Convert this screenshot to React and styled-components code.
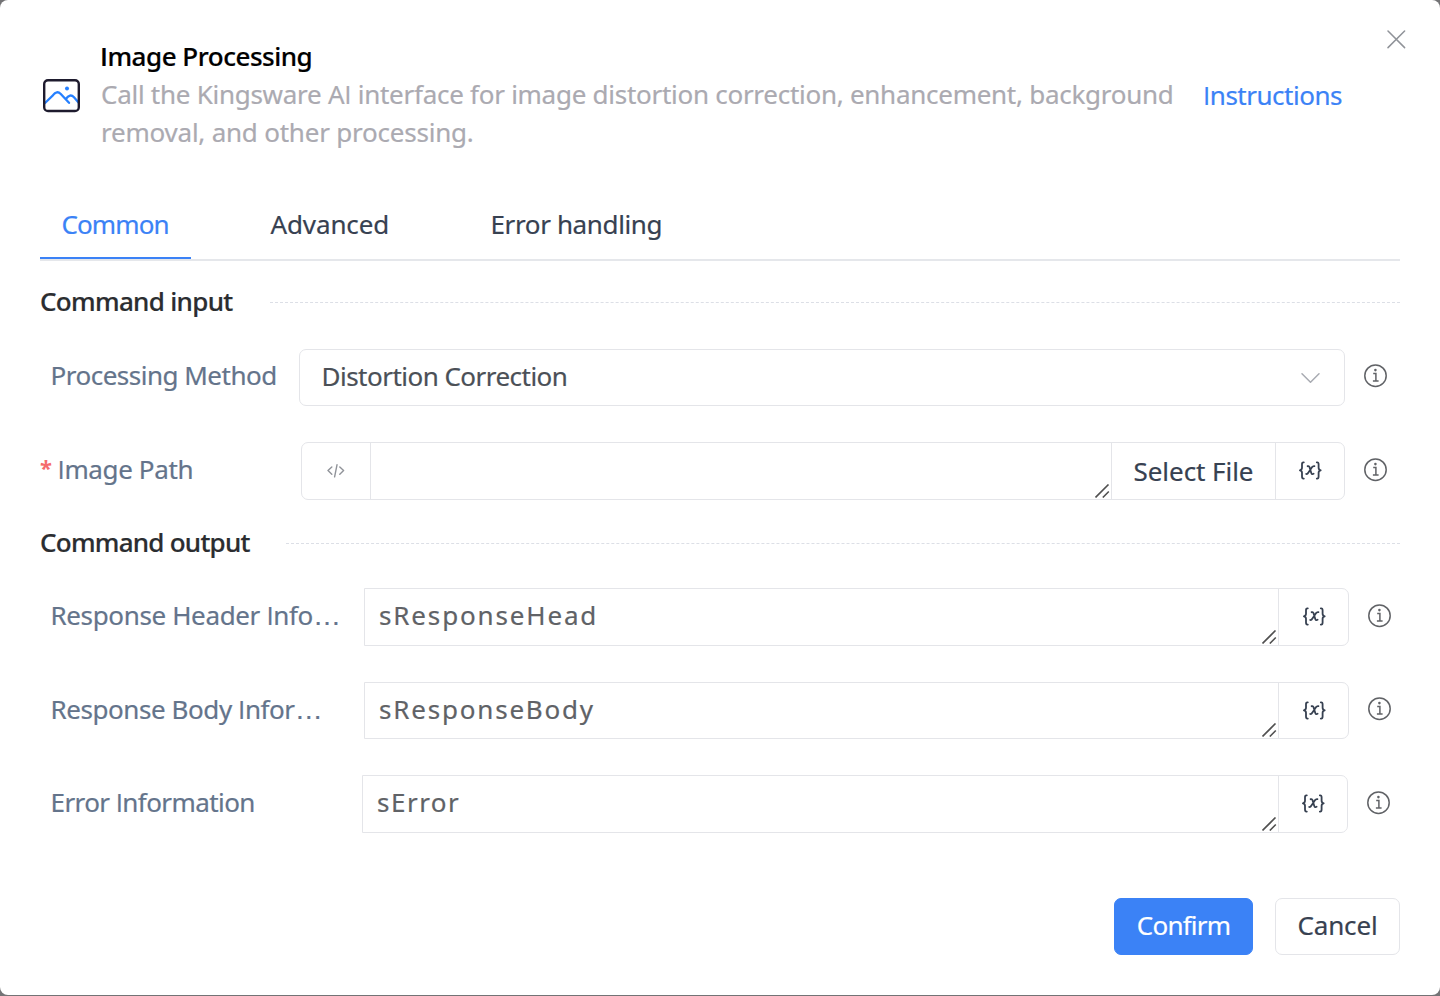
import React from "react";
import styled, { createGlobalStyle } from "styled-components";

const Global = createGlobalStyle`
  *, *::before, *::after { box-sizing: border-box; }
  body { margin: 0; background: #737375; font-family: "Noto Sans", "Open Sans", sans-serif; font-size: 26px; color: #374151; }
  button { font: inherit; color: inherit; margin: 0; padding: 0; background: none; border: 0; }
  svg { display: block; flex: none; }
`;

const Dialog = styled.main`
  width: 1440px;
  height: 995px;
  padding: 37px 40px 40px;
  background: #fff;
  border-radius: 8px;
  display: flex;
  flex-direction: column;
  position: relative;
  overflow: hidden;
`;

const TextLine = styled.span`
  white-space: nowrap;
  letter-spacing: ${(p) => p.$track || 0}px;
  -webkit-text-stroke: 0.2px currentColor;
`;

const PlainCapital = styled.span`
  font-family: "Open Sans", sans-serif;
  h1 & { font-weight: 600; }
`;

const WideEllipsis = styled.span`
  font-family: "Liberation Sans", sans-serif;
  font-size: 28px;
  line-height: 1;
`;

/* Sets the capital I without serifs and the ellipsis with wide dots. */
const Text = ({ track, children }) => (
  <TextLine $track={track}>
    {children.split(/(I|…)/).filter(Boolean).map((part, i) => {
      if (part === "I") return <PlainCapital key={i}>I</PlainCapital>;
      if (part === "…") return <WideEllipsis key={i}>…</WideEllipsis>;
      return part;
    })}
  </TextLine>
);

const CloseButton = styled.button`
  position: absolute;
  top: 30px;
  right: 34px;
`;

const Header = styled.header`
  height: 114px;
  display: flex;
  align-items: center;
  padding-left: 3px;
`;

const HeaderIcon = styled.div`
  padding-top: 4px;
`;

const Intro = styled.div`
  width: 1102px;
  margin-left: 21px;
  line-height: 38px;
`;

const Title = styled.h1`
  margin: 0 0 0 -1px;
  font-size: 26px;
  line-height: 38px;
  font-weight: 500;
  color: #000;
`;

const Description = styled.p`
  margin: 0;
  display: flex;
  flex-direction: column;
  color: #abaab1;
`;

const Link = styled.a`
  color: #3b82f6;
  line-height: 38px;
  padding-top: 2px;
`;

const Tabs = styled.nav`
  height: 70px;
  margin-top: 40px;
  display: flex;
  border-bottom: 2px solid #e5e7eb;
`;

const Tab = styled.button`
  width: ${(p) => p.$width}px;
  height: 68px;
  padding-left: ${(p) => p.$inset}px;
  text-align: left;
  line-height: 66px;
  color: ${(p) => (p.$active ? "#3b82f6" : "#374151")};
  border-bottom: 2px solid ${(p) => (p.$active ? "#3b82f6" : "transparent")};
`;

const Section = styled.h2`
  height: 40px;
  margin: ${(p) => p.$top}px 0 ${(p) => p.$bottom}px;
  display: flex;
  align-items: center;
  font-size: 26px;
  line-height: 38px;
  font-weight: 500;
  color: #2b2d30;
`;

const SectionName = styled.div`
  width: ${(p) => p.$width}px;
  height: 40px;
`;

const Rule = styled.div`
  flex: 1;
  border-top: 1px dashed #dcdfe6;
`;

const Row = styled.div`
  height: ${(p) => p.$height}px;
  margin-bottom: ${(p) => p.$gap}px;
  display: flex;
`;

const Label = styled.label`
  width: ${(p) => p.$width}px;
  padding-left: ${(p) => (p.$required ? 0 : 10.5)}px;
  display: flex;
  line-height: ${(p) => p.$line || 54}px;
  color: #64748b;
  white-space: nowrap;
`;

const Required = styled.span`
  width: 17.5px;
  font-size: 22px;
  font-weight: 700;
  line-height: 50px;
  color: #f56c6c;
`;

const Field = styled.div`
  width: ${(p) => p.$width}px;
  display: flex;
  border: 1px solid #e4e5e9;
  border-radius: ${(p) => (p.$squareLeft ? "0 7px 7px 0" : "7px")};
`;

const Cell = styled.div`
  width: ${(p) => p.$width}px;
  display: flex;
  align-items: center;
  justify-content: center;
  border-left: ${(p) => (p.$first ? 0 : 1)}px solid #e4e5e9;
`;

const ButtonCell = styled(Cell)`
  padding-bottom: 1px;
`;

const Value = styled.div`
  flex: 1;
  display: flex;
  justify-content: space-between;
  align-items: stretch;
  padding: 0 1px 0 14px;
  line-height: 53px;
  color: #606266;
`;

const SelectValue = styled(Value)`
  padding: 0 23px 0 21.5px;
  color: #4b5057;
`;

const ChevronSlot = styled.div`
  display: flex;
  align-items: center;
`;

const Grip = styled.div`
  display: flex;
  align-items: flex-end;
  padding-bottom: 1px;
`;

const Hint = styled.div`
  padding: ${(p) => p.$top || 15}px 0 0 18.5px;
`;

const Footer = styled.footer`
  margin-top: auto;
  height: 57px;
  display: flex;
  justify-content: flex-end;
  gap: 22px;
`;

const Button = styled.button`
  width: ${(p) => p.$width}px;
  height: 57px;
  padding-bottom: 3px;
  line-height: 52px;
  border-radius: 7px;
  text-align: center;
  border: 1px solid ${(p) => (p.$primary ? "#3b82f6" : "#e4e5e9")};
  background: ${(p) => (p.$primary ? "#3b82f6" : "#fff")};
  color: ${(p) => (p.$primary ? "#fff" : "#374151")};
`;

const PictureIcon = () => (
  <svg width="37" height="34" viewBox="0 0 37 34" fill="none" strokeLinecap="round">
    <path d="M2 24L10 16.2Q13.7 11 17.8 15L26 23.8M22.8 20Q27 14 31 18.3L35.5 23.5" stroke="#2680ff" strokeWidth="2.3" />
    <rect x="1.2" y="1.2" width="34.6" height="30.8" rx="3.8" stroke="#1e1b2e" strokeWidth="2.4" />
    <circle cx="24" cy="9.5" r="2" fill="#2680ff" />
  </svg>
);

const CloseIcon = () => (
  <svg width="19" height="19" viewBox="0 0 19 19" fill="none" stroke="#909399" strokeWidth="1.5" strokeLinecap="round">
    <path d="M1 1L17.6 17.6M17.6 1L1 17.6" />
  </svg>
);

const ChevronIcon = () => (
  <svg width="20" height="12" viewBox="0 0 20 12" fill="none" stroke="#a8abb2" strokeWidth="1.5" strokeLinecap="round" strokeLinejoin="round">
    <path d="M1 1.7L9.5 10.2L18 1.7" />
  </svg>
);

const InfoIcon = () => (
  <svg width="24" height="24" viewBox="0 0 24 24" fill="none" stroke="#606266" strokeWidth="1.5">
    <circle cx="11.5" cy="11.7" r="10.7" />
    <path d="M9.2 9.6H11.9V16.8M8.9 17H14.6" strokeWidth="1.5" />
    <circle cx="11.4" cy="6.1" r="1.3" fill="#606266" stroke="none" />
  </svg>
);

const CodeIcon = () => (
  <svg width="18" height="14" viewBox="0 0 18 14" fill="none" stroke="#909399" strokeWidth="1.4" strokeLinecap="round" strokeLinejoin="round">
    <path d="M4.8 3L1 6.6L4.8 10.2M12.8 3L16.6 6.6L12.8 10.2M10 0.8L7.6 12.8" />
  </svg>
);

const VariableIcon = () => (
  <svg width="24" height="20" viewBox="0 0 24 20" fill="none" stroke="#374151" strokeWidth="1.8" strokeLinecap="round" strokeLinejoin="round">
    <path d="M5.8 1.3H5.4Q4 1.3 4 3.3V6.8Q4 8.9 1.9 9.3Q4 9.7 4 11.8V15.6Q4 17.6 5.4 17.6H5.8" />
    <path d="M18.8 1.3H19.2Q20.6 1.3 20.6 3.3V6.8Q20.6 8.9 22.7 9.3Q20.6 9.7 20.6 11.8V15.6Q20.6 17.6 19.2 17.6H18.8" />
    <path d="M9.6 5.2Q11 4.6 11.6 6.4L13.2 11.8Q13.8 13.8 15.6 12.8M16.4 5.2Q15 4.9 13.8 6.4L10.6 11.2Q9.4 13.3 8.2 13" />
  </svg>
);

const GripIcon = () => (
  <svg width="15" height="14" viewBox="0 0 15 14" fill="none" stroke="#505050" strokeWidth="1.6">
    <path d="M0.5 13.5L13.5 0.5M7.8 13.5L13.8 7.5" />
  </svg>
);

const outputs = [
  { label: "Response Header Info…", value: "sResponseHead", labelWidth: 324, width: 985, varWidth: 70, height: 58, gap: 36, track: -0.36, valueTrack: 1.85 },
  { label: "Response Body Infor…", value: "sResponseBody", labelWidth: 324, width: 985, varWidth: 70, height: 57, gap: 36, track: -0.43, valueTrack: 1.8, hintTop: 14.5 },
  { label: "Error Information", value: "sError", labelWidth: 322, width: 986, varWidth: 69, height: 58, gap: 0, track: -0.58, valueTrack: 1.5 },
];

export default function App() {
  return (
    <>
      <Global />
      <Dialog>
        <CloseButton aria-label="Close"><CloseIcon /></CloseButton>
        <Header>
          <HeaderIcon><PictureIcon /></HeaderIcon>
          <Intro>
            <Title><Text track={-0.48}>Image Processing</Text></Title>
            <Description>
              <Text track={-0.27}>Call the Kingsware AI interface for image distortion correction, enhancement, background</Text>
              <Text track={-0.22}>removal, and other processing.</Text>
            </Description>
          </Intro>
          <Link><Text track={-0.48}>Instructions</Text></Link>
        </Header>

        <Tabs>
          <Tab $active $width={151} $inset={21.5}><Text track={-0.9}>Common</Text></Tab>
          <Tab $width={220} $inset={79.5}><Text track={-0.12}>Advanced</Text></Tab>
          <Tab $width={260} $inset={79.5}><Text track={-0.37}>Error handling</Text></Tab>
        </Tabs>

        <Section $top={21} $bottom={27}>
          <SectionName $width={230}><Text track={-0.68}>Command input</Text></SectionName>
          <Rule />
        </Section>
        <Row $height={57} $gap={36}>
          <Label $width={259} $line={53}><Text track={-0.5}>Processing Method</Text></Label>
          <Field $width={1046}>
            <SelectValue>
              <Text track={-0.52}>Distortion Correction</Text>
              <ChevronSlot><ChevronIcon /></ChevronSlot>
            </SelectValue>
          </Field>
          <Hint><InfoIcon /></Hint>
        </Row>
        <Row $height={58} $gap={0}>
          <Label $width={261} $required><Required>*</Required><Text track={-0.37}>Image Path</Text></Label>
          <Field $width={1044}>
            <Cell $first $width={68}><CodeIcon /></Cell>
            <Cell $width={0} />
            <Value>
              <span />
              <Grip><GripIcon /></Grip>
            </Value>
            <ButtonCell $width={164}><Text track={-0.05}>Select File</Text></ButtonCell>
            <Cell $width={69}><VariableIcon /></Cell>
          </Field>
          <Hint $top={15.5}><InfoIcon /></Hint>
        </Row>

        <Section $top={23} $bottom={25}>
          <SectionName $width={246}><Text track={-0.75}>Command output</Text></SectionName>
          <Rule />
        </Section>
        {outputs.map((o) => (
          <Row key={o.label} $height={o.height} $gap={o.gap}>
            <Label $width={o.labelWidth}><Text track={o.track}>{o.label}</Text></Label>
            <Field $width={o.width} $squareLeft>
              <Value>
                <Text track={o.valueTrack}>{o.value}</Text>
                <Grip><GripIcon /></Grip>
              </Value>
              <Cell $width={o.varWidth}><VariableIcon /></Cell>
            </Field>
            <Hint $top={o.hintTop || 15.5}><InfoIcon /></Hint>
          </Row>
        ))}

        <Footer>
          <Button $primary $width={139}><Text track={-0.8}>Confirm</Text></Button>
          <Button $width={125}><Text track={-0.15}>Cancel</Text></Button>
        </Footer>
      </Dialog>
    </>
  );
}
